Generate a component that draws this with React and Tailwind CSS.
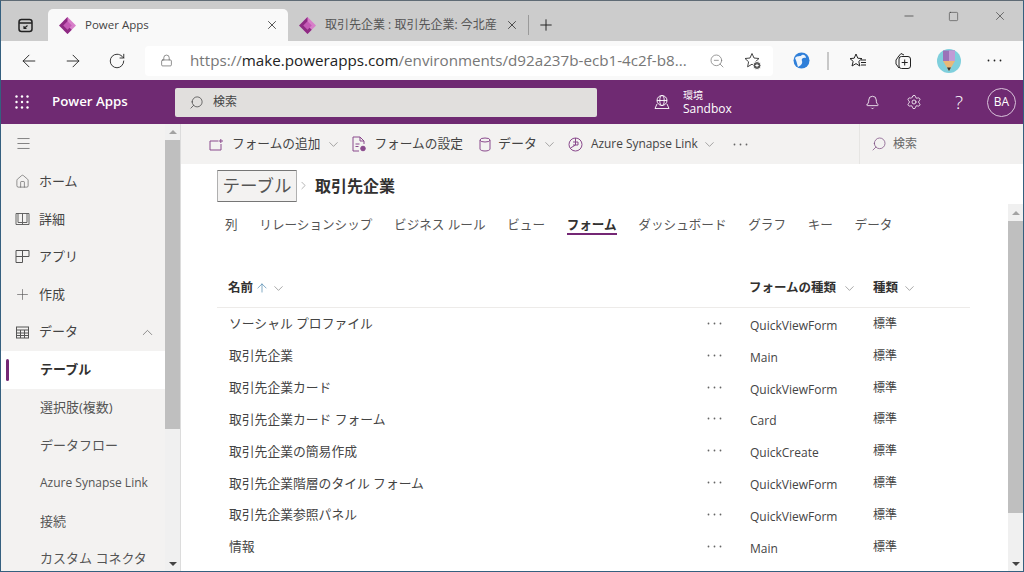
// Power Apps forms page inside an Edge window.
import { ArrowLeft, ArrowRight, RotateCw, Lock, ZoomOut, Plus, X, Minus, Square, Bell, Settings, Search, ChevronDown, ChevronUp, ChevronRight, Home, Menu, ArrowUp } from 'lucide-react';

const fontStack = "font-['Open_Sans','Noto_Sans_CJK_JP',sans-serif]";

function Logo() {
  return (
    <svg width="17" height="17" viewBox="0 0 16 16" className="shrink-0">
      <path d="M8 0 L16 8 L8 16 L4 12 L8 8 L4 4 Z" fill="#d77fc9" />
      <path d="M8 0 L0 8 L8 16 L12 12 L8 8 Z" fill="#8e2b83" />
      <path d="M8 4 L12 8 L8 12 L4 8 Z" fill="#c45bb5" />
    </svg>
  );
}

function Apps() {
  return (
    <svg width="14" height="14" viewBox="0 0 14 14" fill="#fff">
      {[1.5, 7, 12.5].flatMap((y) => [1.5, 7, 12.5].map((x) => <circle key={`${x}-${y}`} cx={x} cy={y} r="1.2" />))}
    </svg>
  );
}

function Dots({ className }) {
  return (
    <svg width="15" height="3" viewBox="0 0 15 3" fill="currentColor" className={className}>
      <circle cx="1.5" cy="1.5" r="0.9" /><circle cx="7.5" cy="1.5" r="0.9" /><circle cx="13.5" cy="1.5" r="0.9" />
    </svg>
  );
}

function Tab({ active, label }) {
  return (
    <div className={`flex h-[32px] w-[240px] items-center rounded-t-[5px] pl-[11px] ${active ? 'bg-[#f9f9f9]' : ''}`}>
      <Logo />
      <span className={`ml-[9px] flex-1 overflow-hidden whitespace-nowrap ${active ? 'text-[11.5px] text-[#444]' : 'text-[12px] text-[#555]'}`}>{label}</span>
      <X size={14} strokeWidth={1.3} className="mr-[9px] ml-[6px] shrink-0 text-[#222]" />
    </div>
  );
}

function BrowserChrome() {
  return (
    <>
      <div className="flex h-[40px] shrink-0 items-end bg-[#cccccc] pl-[2px]">
        <div className="flex h-[32px] w-[45px] items-center justify-center">
          <svg width="15" height="15" viewBox="0 0 15 15" fill="none" stroke="#222" strokeWidth="1.5">
            <rect x="1" y="1.5" width="13" height="12" rx="2.5" />
            <path d="M1 5h13" /><path d="M9.5 7.5 L6 10.5 M6 8v2.5h2.5" strokeWidth="1.1" />
          </svg>
        </div>
        <Tab active label="Power Apps" />
        <Tab label="取引先企業 : 取引先企業: 今北産" />
        <div className="mb-[6px] h-[20px] w-px bg-[#9a9a9a]" />
        <Plus size={18} strokeWidth={1.3} className="mb-[7px] ml-[8px] text-[#222]" />
        <div className="flex-1" />
        <div className="mb-[18px] flex items-center text-[#333]">
          <Minus size={14} strokeWidth={1.2} />
          <Square size={11} strokeWidth={1.2} className="ml-[32px]" />
          <X size={14} strokeWidth={1.1} className="mr-[16px] ml-[34px]" />
        </div>
      </div>
      <div className="flex h-[39px] shrink-0 items-center bg-[#f9f9f9] pl-[18px]">
        <ArrowLeft size={20} strokeWidth={1.1} className="text-[#222]" />
        <ArrowRight size={20} strokeWidth={1.1} className="ml-[24px] text-[#222]" />
        <RotateCw size={18} strokeWidth={1.2} className="ml-[25px] text-[#222]" />
        <div className="ml-[19px] flex h-[30px] w-[628px] items-center rounded-[4px] bg-white pl-[15px]">
          <Lock size={13} strokeWidth={1.2} className="text-[#555]" />
          <span className="ml-[17px] whitespace-nowrap text-[15.2px] text-[#777]">https://<span className="text-[#222]">make.powerapps.com</span>/environments/d92a237b-ecb1-4c2f-b8...</span>
          <div className="flex-1" />
          <ZoomOut size={16} strokeWidth={1.1} className="text-[#777]" />
          <svg width="18" height="18" viewBox="0 0 18 18" fill="none" stroke="#444" strokeWidth="1" className="mr-[11px] ml-[19px]">
            <path d="M8 1.5 L10 6 L15 6.5 L11.4 9.8 L12.4 14.8 L8 12.2 L3.6 14.8 L4.6 9.8 L1 6.5 L6 6 Z" />
            <circle cx="13" cy="13.5" r="4" fill="#555" stroke="#fff" />
            <path d="M11.3 13.5h3.4M13 11.8v3.4" stroke="#fff" />
          </svg>
        </div>
        <svg width="17" height="17" viewBox="0 0 17 17" className="ml-[20px]">
          <circle cx="8.5" cy="8.5" r="8" fill="#2f7fd9" />
          <path d="M2 6c3-3 5-1 7-3 2-1 4 1 4 3-3-1-5 1-4 3 1 3-2 5-4 6-1-3-1-5-3-9z" fill="#eef4fb" />
        </svg>
        <div className="ml-[17px] h-[18px] w-[2px] bg-[#c8c8c8]" />
        <svg width="18" height="18" viewBox="0 0 18 18" fill="none" stroke="#222" strokeWidth="1" className="ml-[20px]">
          <path d="M7 2 L8.8 6.2 L13 6.6 L9.8 9.4 L10.8 14 L7 11.6 L3 14 L4.2 9.4 L1 6.6 L5.2 6.2 Z" />
          <path d="M12 8h5M12 10.5h5M12 13h5" />
        </svg>
        <svg width="18" height="18" viewBox="0 0 18 18" fill="none" stroke="#222" strokeWidth="1" className="ml-[27px]">
          <path d="M4 5 L7 1.5 L10 3" /><path d="M2 8 L4.5 4.5 M2 8 V12 L5 16" />
          <rect x="5" y="4.5" width="11.5" height="12" rx="2.5" />
          <path d="M10.7 7.5v6M7.7 10.5h6" />
        </svg>
        <svg width="24" height="24" viewBox="0 0 24 24" className="ml-[25px]">
          <circle cx="12" cy="12" r="12" fill="#7fcfdc" />
          <path d="M6 1.5 L18 1.5 L18 12 L6 12 Z" fill="#9b72b8" />
          <path d="M12 1.5 L18 1.5 L18 12 L12 12 Z" fill="#c19bd6" />
          <path d="M6 12 L18 12 L12 22 Z" fill="#e8b878" />
          <path d="M10 18.5 L14 18.5 L12 22 Z" fill="#333" />
        </svg>
        <Dots className="ml-[26px] text-[#222]" />
      </div>
    </>
  );
}

function AppHeader() {
  return (
    <div className="flex h-[44px] shrink-0 items-center bg-[#6f2a72] text-white">
      <div className="ml-[14px]"><Apps /></div>
      <span className="ml-[23px] w-[123px] text-[13.3px] font-semibold">Power Apps</span>
      <div className="flex h-[29px] w-[422px] items-center rounded-[2px] bg-[#e1dfdd] pl-[14px]">
        <Search size={15} strokeWidth={1.2} className="scale-x-[-1] text-[#444]" />
        <span className="ml-[9px] text-[12px] text-[#444]">検索</span>
      </div>
      <svg width="16" height="16" viewBox="0 0 16 16" fill="none" stroke="#fff" strokeWidth="0.9" className="ml-[57px]">
        <circle cx="8" cy="6.5" r="5" /><ellipse cx="8" cy="6.5" rx="2.2" ry="5" /><path d="M3 6.5h10M1 14.5h14L13 10M3 10l-2 4.5" />
      </svg>
      <div className="ml-[13px] flex w-[182px] flex-col leading-[14px]">
        <span className="text-[10px]">環境</span>
        <span className="text-[12px]">Sandbox</span>
      </div>
      <Bell size={15} strokeWidth={1.3} />
      <Settings size={16} strokeWidth={1.2} className="ml-[26px]" />
      <span className="ml-[33px] w-[10px] text-[19px] leading-none font-light">?</span>
      <div className="mr-[7px] ml-[22px] flex h-[29px] w-[29px] items-center justify-center rounded-full border border-[#d9c3da] text-[12px]">BA</div>
    </div>
  );
}

const navItems = [
  { label: 'ホーム', icon: <Home size={15} strokeWidth={1} /> },
  { label: '詳細', icon: <svg width="15" height="14" viewBox="0 0 15 14" fill="none" stroke="currentColor" strokeWidth="0.9"><path d="M1 1.5h13v11H1zM3 1.5v9h4.5l0 2M12 1.5v9H7.5M7.5 1.5v9" /></svg> },
  { label: 'アプリ', icon: <svg width="15" height="15" viewBox="0 0 15 15" fill="none" stroke="currentColor"><path d="M1 1.5h13v6h-6.5v6h-6.5zM1 7.5h6.5M7.5 1.5v6" /></svg> },
  { label: '作成', icon: <Plus size={17} strokeWidth={0.9} /> },
  { label: 'データ', icon: <svg width="13" height="13" viewBox="0 0 13 13" fill="none" stroke="currentColor"><rect x="0.5" y="1" width="12" height="11" /><path d="M0.5 4h12M0.5 7h12M0.5 9.5h12M4.5 4v8M8.5 4v8" /></svg>, open: true },
];
const subItems = ['選択肢(複数)', 'データフロー', 'Azure Synapse Link', '接続', 'カスタム コネクタ'];

function Scrollbar({ thumbTop, thumb }) {
  return (
    <div className="flex h-full w-[15px] shrink-0 flex-col bg-[#f0f0f0]">
      <div className={`flex items-center justify-center ${thumbTop}`}><div className="h-0 w-0 border-x-[4px] border-b-[4px] border-x-transparent border-b-[#a3a3a3]" /></div>
      <div className={`${thumb} bg-[#bfbfbf]`} />
      <div className="flex-1" />
      <div className="flex h-[15px] items-center justify-center"><div className="h-0 w-0 border-x-[4px] border-t-[4px] border-x-transparent border-t-[#444]" /></div>
    </div>
  );
}

function Sidebar() {
  return (
    <div className="flex h-full w-[180px] shrink-0 border-r border-[#dcdcdc] bg-[#f3f2f1]">
      <div className="flex w-[164px] shrink-0 flex-col overflow-hidden">
        <div className="flex h-[39px] shrink-0 items-center pl-[14px]"><Menu size={17} strokeWidth={0.9} className="text-[#444]" /></div>
        {navItems.map((item) => (
          <div key={item.label} className="flex h-[37.6px] shrink-0 items-center text-[13px] text-[#444]">
            <div className="flex w-[37px] justify-center pl-[6px] text-[#555]">{item.icon}</div>
            <span className="flex-1 pl-[1px]">{item.label}</span>
            {item.open && <ChevronUp size={17} strokeWidth={0.9} className="mr-[9px] text-[#555]" />}
          </div>
        ))}
        <div className="flex h-[38px] shrink-0 items-center bg-white">
          <div className="ml-[5px] h-[22px] w-[3px] rounded-[2px] bg-[#742774]" />
          <span className="ml-[31px] text-[13px] font-bold text-[#323130]">テーブル</span>
        </div>
        {subItems.map((label) => (
          <div key={label} className="flex h-[37.8px] shrink-0 items-center pl-[39px] text-[13px] whitespace-nowrap text-[#555]">
            <span className={label.startsWith('Azure') ? 'text-[12px]' : ''}>{label}</span>
          </div>
        ))}
      </div>
      <Scrollbar thumbTop="h-[16px]" thumb="h-[289px]" />
    </div>
  );
}

function CommandBar() {
  return (
    <div className="flex h-[40px] shrink-0 items-center bg-[#f3f2f1] text-[12.7px] text-[#444]">
      <svg width="15" height="13" viewBox="0 0 15 13" fill="none" stroke="#8a4a8d" className="ml-[28px]"><path d="M9 3H1v9h11V6" /><path d="M9.5 3H14M11.8 1v4" /></svg>
      <span className="ml-[8px]">フォームの追加</span>
      <ChevronDown size={15} strokeWidth={0.9} className="ml-[6px] text-[#666]" />
      <svg width="14" height="16" viewBox="0 0 14 16" fill="none" stroke="#8a4a8d" className="ml-[11px]"><path d="M1 1h7l4 4v3M8 1v4h4M1 1v14h6M3.5 8h4M3.5 10.5h3" /><circle cx="11" cy="12.5" r="2.3" fill="#8a4a8d" /></svg>
      <span className="ml-[8px]">フォームの設定</span>
      <svg width="12" height="15" viewBox="0 0 12 15" fill="none" stroke="#8a4a8d" className="ml-[16px]"><ellipse cx="6" cy="3" rx="5" ry="2" /><path d="M1 3v9c0 1 2 2 5 2s5-1 5-2V3" /></svg>
      <span className="ml-[7px] text-[13px]">データ</span>
      <ChevronDown size={15} strokeWidth={0.9} className="ml-[5px] text-[#666]" />
      <svg width="15" height="15" viewBox="0 0 15 15" fill="none" stroke="#8a4a8d" className="ml-[11px]"><circle cx="7.5" cy="7.5" r="6.5" /><path d="M7.5 1v7L2.5 11M5 5h5v3H5" /></svg>
      <span className="ml-[8px] text-[11.9px]">Azure Synapse Link</span>
      <ChevronDown size={15} strokeWidth={0.9} className="ml-[4px] text-[#666]" />
      <Dots className="ml-[16px] text-[#666]" />
      <div className="flex-1" />
      <div className="flex h-full w-[151px] items-center border-l border-[#e6e5e3] pl-[11px]">
        <Search size={16} strokeWidth={1.1} className="scale-x-[-1] text-[#7a4a80]" />
        <span className="ml-[6px] text-[12px] text-[#666]">検索</span>
      </div>
      <div className="h-full w-[13px] bg-[#f1f0ef]" />
    </div>
  );
}

const tabs = ['列', 'リレーションシップ', 'ビジネス ルール', 'ビュー', 'フォーム', 'ダッシュボード', 'グラフ', 'キー', 'データ'];
const rows = [
  ['ソーシャル プロファイル', 'QuickViewForm'],
  ['取引先企業', 'Main'],
  ['取引先企業カード', 'QuickViewForm'],
  ['取引先企業カード フォーム', 'Card'],
  ['取引先企業の簡易作成', 'QuickCreate'],
  ['取引先企業階層のタイル フォーム', 'QuickViewForm'],
  ['取引先企業参照パネル', 'QuickViewForm'],
  ['情報', 'Main'],
];

function FormsTable() {
  return (
    <div className="mt-[38px] w-[753px] flex-1">
      <div className="flex h-[35px] items-center border-b border-[#edebe9] pb-[4px] text-[12.5px] font-bold text-[#323130]">
        <span className="ml-[11px]">名前</span>
        <ArrowUp size={14} strokeWidth={1.2} className="ml-[2px] text-[#4d86ad]" />
        <ChevronDown size={15} strokeWidth={0.9} className="ml-[2px] text-[#666]" />
        <div className="flex-1" />
        <span className="w-[93px]">フォームの種類</span>
        <ChevronDown size={15} strokeWidth={0.9} className="text-[#666]" />
        <span className="ml-[16px]">種類</span>
        <ChevronDown size={15} strokeWidth={0.9} className="mr-[53px] ml-[4px] text-[#666]" />
      </div>
      {rows.map(([name, type], index) => (
        <div key={index} className="flex h-[31.85px] items-center text-[12.8px] text-[#444]">
          <span className="ml-[12px] w-[478px] whitespace-nowrap">{name}</span>
          <Dots className="mb-[1px] text-[#666]" />
          <span className="mt-[4px] ml-[28px] w-[123px] text-[12px]">{type}</span>
          <span className="text-[12px]">標準</span>
        </div>
      ))}
    </div>
  );
}

export default function App() {
  return (
    <div className={`flex h-[572px] w-[1024px] flex-col overflow-hidden border border-t-[#5f6b75] border-r-[#35607f] border-b-[#35607f] border-l-[#35607f] bg-white ${fontStack}`}>
      <BrowserChrome />
      <AppHeader />
      <div className="flex min-h-0 flex-1">
        <Sidebar />
        <div className="flex min-w-0 flex-1 flex-col">
          <CommandBar />
          <div className="flex h-[40px] shrink-0 items-center pt-[3px] pl-[36px]">
            <button type="button" className="h-[32px] w-[80px] rounded-[1px] border border-x-[#b0b0b0] border-y-[#767676] bg-[#f3f2f1] text-[17.5px] whitespace-nowrap text-[#555]">テーブル</button>
            <ChevronRight size={13} strokeWidth={1} className="text-[#777]" />
            <span className="mt-[1px] ml-[5px] text-[16px] font-bold text-[#323130]">取引先企業</span>
          </div>
          <div className="flex min-h-0 flex-1">
            <div className="min-w-0 flex-1 pl-[36px]">
              <div className="flex pt-[12px] pl-[8px] text-[12.6px] text-[#555]">
                {tabs.map((tab) => (
                  <span key={tab} className={`mr-[21.7px] h-[19px] whitespace-nowrap ${tab === 'フォーム' ? 'border-b-2 border-[#742774] font-bold text-[#323130]' : ''}`}>{tab}</span>
                ))}
              </div>
              <FormsTable />
            </div>
            <Scrollbar thumbTop="h-[17px]" thumb="h-[292px]" />
          </div>
        </div>
      </div>
    </div>
  );
}
